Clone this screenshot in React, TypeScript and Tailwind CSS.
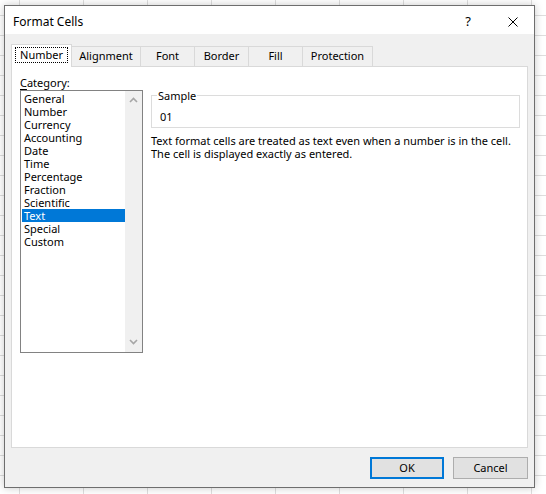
const categories = [
  "General",
  "Number",
  "Currency",
  "Accounting",
  "Date",
  "Time",
  "Percentage",
  "Fraction",
  "Scientific",
  "Text",
  "Special",
  "Custom",
];

const tabs = [
  { label: "Number", w: "w-[61px]" },
  { label: "Alignment", w: "w-[70px]" },
  { label: "Font", w: "w-[55px]" },
  { label: "Border", w: "w-[55px]" },
  { label: "Fill", w: "w-[55px]" },
  { label: "Protection", w: "w-[71px]" },
];

function Chevron({ up }: { up?: boolean }) {
  return (
    <svg width="9" height="6" viewBox="0 0 9 6" className="block">
      <path
        d={up ? "M1 5 L4.5 1.5 L8 5" : "M1 1 L4.5 4.5 L8 1"}
        fill="none"
        stroke="#a6a6a6"
        strokeWidth="1.6"
      />
    </svg>
  );
}

function CategoryList({ selected }: { selected: string }) {
  return (
    <div className="flex w-[123px] h-[263px] border border-[#828282] bg-white">
      <ul className="flex-1 pl-px pt-px">
        {categories.map((c) => (
          <li
            key={c}
            className={
              c === selected
                ? "h-[13px] leading-[13px] pl-[2px] bg-[#0078d7] text-white"
                : "h-[13px] leading-[13px] pl-[2px]"
            }
          >
            {c}
          </li>
        ))}
      </ul>
      {/* scrollbar track */}
      <div className="w-[17px] bg-[#f0f0f0] flex flex-col items-center justify-between pt-[6px] pb-[7px]">
        <Chevron up />
        <Chevron />
      </div>
    </div>
  );
}

export default function App() {
  return (
    <div
      className="w-[546px] h-[494px] overflow-hidden pl-[4px] pt-[5px] bg-white font-['Noto_Sans',sans-serif] text-[11px] text-black bg-[linear-gradient(to_right,#dedede_1px,transparent_1px),linear-gradient(to_bottom,#dedede_1px,transparent_1px)] bg-[size:64px_20px] bg-[position:19px_15px]"
    >
      <div className="w-[531px] h-[483px] flex flex-col border border-[#6e6e6e] bg-[#f0f0f0] shadow-[0_0_8px_rgba(0,0,0,0.22)]">
        {/* title bar */}
        <div className="h-[29px] bg-white flex items-center pl-[8px] pr-[16px] pt-[3px]">
          <span className="text-[12px] flex-1">Format Cells</span>
          <span className="text-[13px] mr-[37px]">?</span>
          <svg width="10" height="10" viewBox="0 0 10 10">
            <path d="M0.5 0.5 L9.5 9.5 M9.5 0.5 L0.5 9.5" stroke="#000" strokeWidth="1" />
          </svg>
        </div>

        <div className="flex-1 flex flex-col pt-[10px] pl-[6px] pr-[6px] pb-[8px]">
          {/* tab strip */}
          <div className="flex items-end h-[22px]">
            {tabs.map((t, i) =>
              i === 0 ? (
                <div
                  key={t.label}
                  className={`${t.w} h-[23px] -mb-px relative z-10 bg-white border border-b-0 border-[#d9d9d9] pt-[2px] px-[3px]`}
                >
                  <div className="h-[16px] border border-dotted border-black flex items-center justify-center">
                    {t.label}
                  </div>
                </div>
              ) : (
                <div
                  key={t.label}
                  className={`${t.w} h-[20px] -ml-px border border-b-0 border-[#d9d9d9] flex items-center justify-center`}
                >
                  {t.label}
                </div>
              )
            )}
          </div>

          {/* tab page */}
          <div className="w-[517px] h-[382px] bg-white border border-[#d9d9d9] flex pt-[9px] pl-[8px]">
            <div className="flex flex-col">
              <div className="leading-[13px] h-[13px]">
                <span className="underline underline-offset-2">C</span>ategory:
              </div>
              <div className="mt-[1px]">
                <CategoryList selected="Text" />
              </div>
            </div>

            <div className="ml-[8px] w-[369px] flex flex-col">
              <fieldset className="border border-[#dcdcdc] h-[39px] pl-[5px] mt-[13px]">
                <legend className="px-px leading-[13px]">Sample</legend>
                <div className="leading-[13px] mt-[8px] pl-[3px]">01</div>
              </fieldset>
              <p className="mt-[6px] leading-[13px]">
                Text format cells are treated as text even when a number is in the cell.
                <br />
                The cell is displayed exactly as entered.
              </p>
            </div>
          </div>

          {/* dialog buttons */}
          <div className="flex justify-end gap-[9px] mt-[9px]">
            <button className="w-[74px] h-[22px] bg-[#e1e1e1] border-2 border-[#0078d7] text-[11px]">
              OK
            </button>
            <button className="w-[75px] h-[22px] bg-[#e1e1e1] border border-[#adadad] text-[11px]">
              Cancel
            </button>
          </div>
        </div>
      </div>
    </div>
  );
}
